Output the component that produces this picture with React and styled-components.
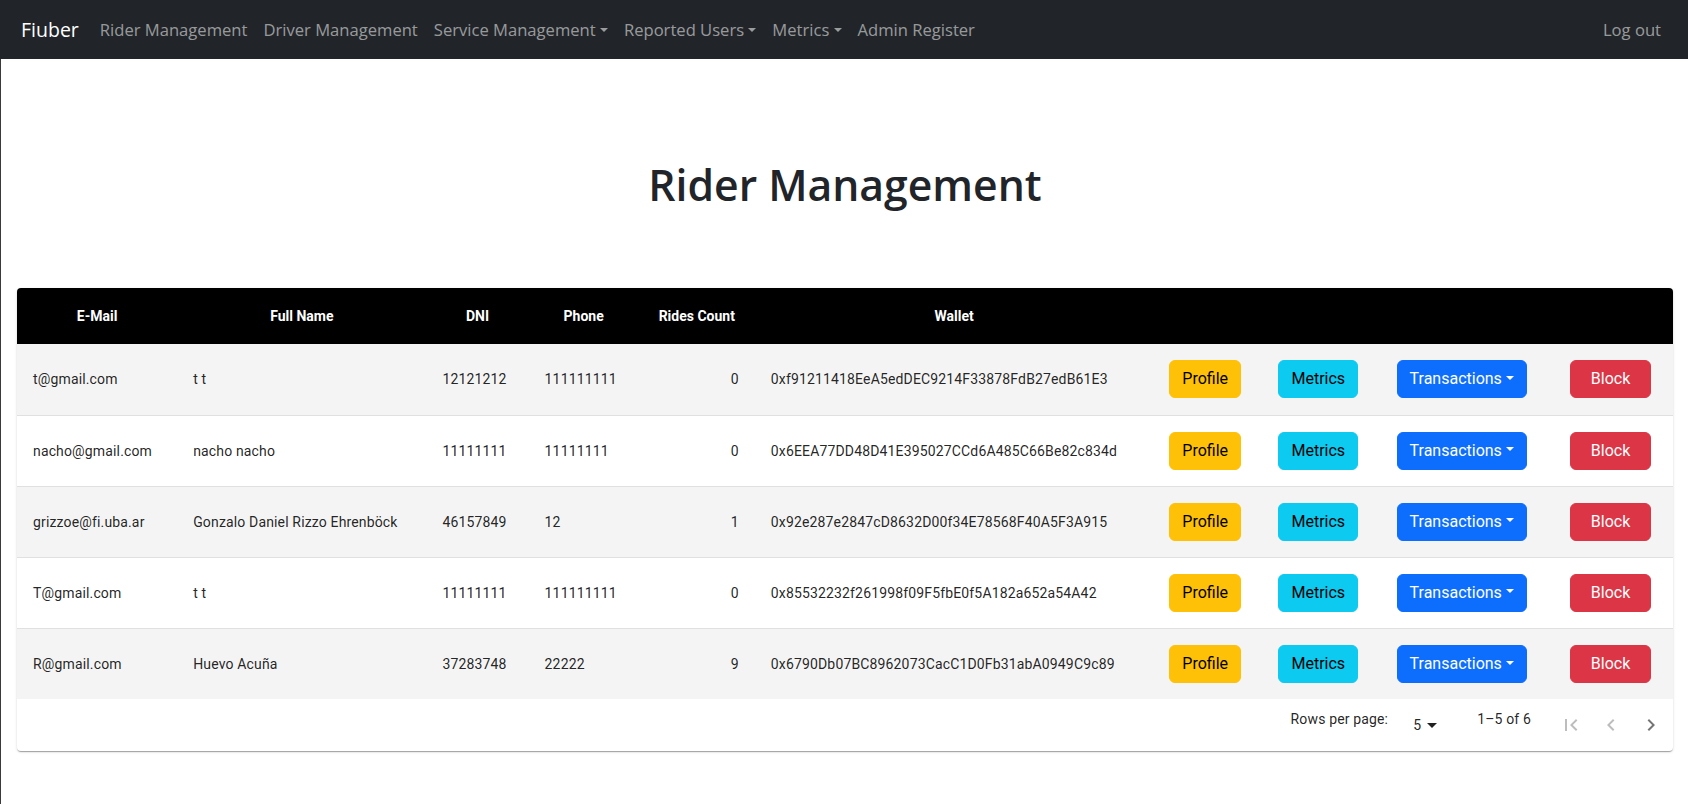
import React from "react";
import styled, { createGlobalStyle } from "styled-components";

const GlobalStyle = createGlobalStyle`
  html, body {
    margin: 0;
    padding: 0;
    background: #fff;
  }
  body {
    font-family: "Open Sans", "Noto Sans", sans-serif;
    color: #212529;
  }
  * { box-sizing: border-box; }
`;

const Navbar = styled.nav`
  height: 59px;
  background: #212529;
  display: flex;
  align-items: center;
  padding: 0 19px 0 21px;
  font-family: "Open Sans", sans-serif;
`;

const Brand = styled.span`
  color: #fff;
  font-size: 19.5px;
  margin-right: 13px;
`;

const NavLinks = styled.div`
  display: flex;
  align-items: center;
  flex: 1;
`;

const NavLink = styled.span`
  color: rgba(255, 255, 255, 0.55);
  font-size: 16.6px;
  padding: 8px;
`;

const Caret = styled.span`
  display: inline-block;
  margin-left: 0.255em;
  vertical-align: 0.255em;
  border-top: 0.3em solid;
  border-right: 0.3em solid transparent;
  border-left: 0.3em solid transparent;
  border-bottom: 0;
`;

const Main = styled.main`
  border-left: 1px solid #3a3a3a;
  padding: 100px 15px 52px 16px;
  min-height: 745px;
`;

const Title = styled.h1`
  margin: 0 0 77px;
  text-align: center;
  font-size: 42.7px;
  font-weight: 600;
  line-height: 52px;
  color: #212529;
`;

const Card = styled.div`
  background: #fff;
  border-radius: 4px;
  overflow: hidden;
  box-shadow: 0px 2px 1px -1px rgba(0, 0, 0, 0.2), 0px 1px 1px 0px rgba(0, 0, 0, 0.14),
    0px 1px 3px 0px rgba(0, 0, 0, 0.12);
  font-family: Roboto, "Liberation Sans", sans-serif;
`;

const Table = styled.table`
  width: 100%;
  table-layout: fixed;
  border-collapse: collapse;
`;

const HeadCell = styled.th`
  background: #000;
  color: #fff;
  font-size: 14px;
  font-weight: 700;
  line-height: 24px;
  padding: 16px;
  text-align: center;
  white-space: nowrap;
`;

const Row = styled.tr`
  background: ${(p) => (p.$odd ? "#f4f4f4" : "#fff")};
  border-bottom: ${(p) => (p.$last ? "none" : "1px solid #e0e0e0")};
`;

const Cell = styled.td`
  height: 71px;
  padding: 0 16px;
  font-size: 14px;
  letter-spacing: 0.01071em;
  color: rgba(0, 0, 0, 0.87);
  text-align: ${(p) => (p.$right ? "right" : "left")};
  vertical-align: middle;
  white-space: nowrap;
`;

const Button = styled.button`
  font-family: Roboto, "Liberation Sans", sans-serif;
  font-size: 16px;
  line-height: 24px;
  padding: 6px ${(p) => (p.$wide ? "20px" : "12px")};
  border: 1px solid ${(p) => p.$bg};
  border-radius: 6px;
  background: ${(p) => p.$bg};
  color: ${(p) => p.$fg};
  white-space: nowrap;
  cursor: pointer;
`;

const Pagination = styled.div`
  height: 52px;
  display: flex;
  align-items: center;
  justify-content: flex-end;
  padding-right: 2px;
  font-size: 14px;
  color: rgba(0, 0, 0, 0.87);
  letter-spacing: 0.01071em;
`;

const PageLabel = styled.span`
  margin-right: 25px;
  position: relative;
  top: -6px;
`;

const Select = styled.div`
  display: flex;
  align-items: center;
  font-size: 14px;
  margin-right: 33px;
  svg { margin-left: -1px; }
`;

const Displayed = styled.span`
  position: relative;
  top: -6px;
  margin-right: 20px;
`;

const IconButton = styled.span`
  width: 40px;
  height: 40px;
  display: flex;
  align-items: center;
  justify-content: center;
  color: ${(p) => (p.$disabled ? "rgba(0,0,0,0.26)" : "rgba(0,0,0,0.54)")};
`;

const Icon = ({ d, size = 24 }) => (
  <svg width={size} height={size} viewBox="0 0 24 24" fill="currentColor">
    <path d={d} />
  </svg>
);

const riders = [
  ["t@gmail.com", "t t", "12121212", "111111111", "0", "0xf91211418EeA5edDEC9214F33878FdB27edB61E3"],
  ["nacho@gmail.com", "nacho nacho", "11111111", "11111111", "0", "0x6EEA77DD48D41E395027CCd6A485C66Be82c834d"],
  ["grizzoe@fi.uba.ar", "Gonzalo Daniel Rizzo Ehrenböck", "46157849", "12", "1", "0x92e287e2847cD8632D00f34E78568F40A5F3A915"],
  ["T@gmail.com", "t t", "11111111", "111111111", "0", "0x85532232f261998f09F5fbE0f5A182a652a54A42"],
  ["R@gmail.com", "Huevo Acuña", "37283748", "22222", "9", "0x6790Db07BC8962073CacC1D0Fb31abA0949C9c89"],
];

const widths = [160, 249, 102, 110, 116, 398, 109, 118, 173, 119];
const headers = ["E-Mail", "Full Name", "DNI", "Phone", "Rides Count", "Wallet", "", "", "", ""];

const App = () => {
  return (
    <>
      <GlobalStyle />
      <Navbar>
        <Brand>Fiuber</Brand>
        <NavLinks>
          <NavLink>Rider Management</NavLink>
          <NavLink>Driver Management</NavLink>
          <NavLink>
            Service Management<Caret />
          </NavLink>
          <NavLink>
            Reported Users<Caret />
          </NavLink>
          <NavLink>
            Metrics<Caret />
          </NavLink>
          <NavLink>Admin Register</NavLink>
        </NavLinks>
        <NavLink>Log out</NavLink>
      </Navbar>

      <Main>
        <Title>Rider Management</Title>
        <Card>
          <Table>
            <colgroup>
              {widths.map((w, i) => (
                <col key={i} style={{ width: w }} />
              ))}
            </colgroup>
            <thead>
              <tr>
                {headers.map((h, i) => (
                  <HeadCell key={i}>{h}</HeadCell>
                ))}
              </tr>
            </thead>
            <tbody>
              {riders.map((r, i) => (
                <Row key={i} $odd={i % 2 === 0} $last={i === riders.length - 1}>
                  <Cell>{r[0]}</Cell>
                  <Cell>{r[1]}</Cell>
                  <Cell>{r[2]}</Cell>
                  <Cell>{r[3]}</Cell>
                  <Cell $right>{r[4]}</Cell>
                  <Cell>{r[5]}</Cell>
                  <Cell>
                    <Button $bg="#ffc107" $fg="#000">Profile</Button>
                  </Cell>
                  <Cell>
                    <Button $bg="#0dcaf0" $fg="#000">Metrics</Button>
                  </Cell>
                  <Cell>
                    <Button $bg="#0d6efd" $fg="#fff">
                      Transactions<Caret />
                    </Button>
                  </Cell>
                  <Cell>
                    <Button $bg="#dc3545" $fg="#fff" $wide>Block</Button>
                  </Cell>
                </Row>
              ))}
            </tbody>
          </Table>
          <Pagination>
            <PageLabel>Rows per page:</PageLabel>
            <Select>
              5
              <Icon d="M7 10l5 5 5-5z" />
            </Select>
            <Displayed>1–5 of 6</Displayed>
            <IconButton $disabled>
              <Icon d="M18.41 16.59L13.82 12l4.59-4.59L17 6l-6 6 6 6zM6 6h2v12H6z" />
            </IconButton>
            <IconButton $disabled>
              <Icon d="M15.41 7.41L14 6l-6 6 6 6 1.41-1.41L10.83 12z" />
            </IconButton>
            <IconButton>
              <Icon d="M10 6L8.59 7.41 13.17 12l-4.58 4.59L10 18l6-6z" />
            </IconButton>
          </Pagination>
        </Card>
      </Main>
    </>
  );
};

export default App;
